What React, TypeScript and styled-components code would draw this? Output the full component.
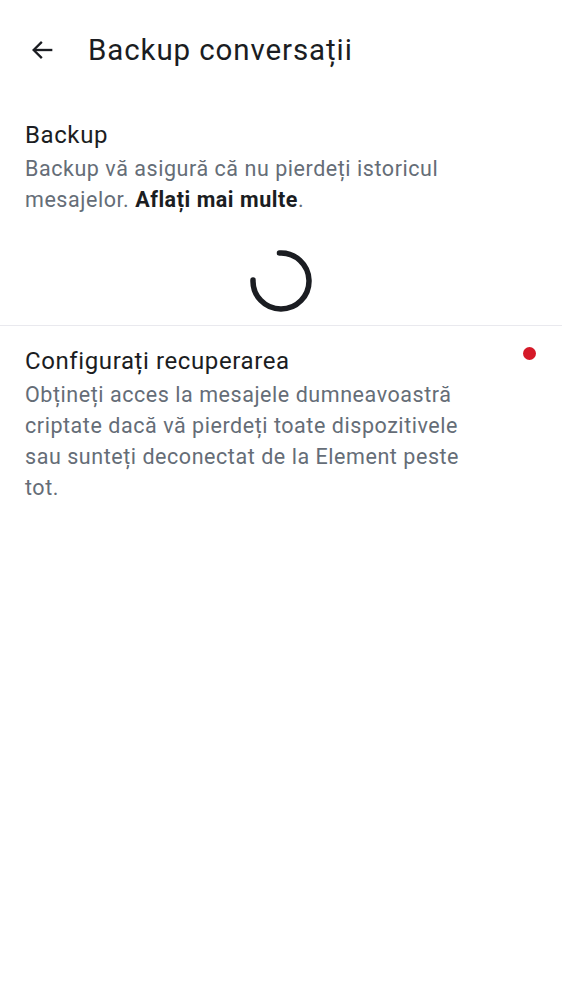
import React from "react";
import styled, { createGlobalStyle } from "styled-components";

const Global = createGlobalStyle`
  html, body { margin: 0; padding: 0; background: #ffffff; }
  body { font-family: Roboto, "Noto Sans", sans-serif; -webkit-font-smoothing: antialiased; }
`;

const Page = styled.div`
  width: 562px;
  min-height: 1000px;
  background: #ffffff;
  display: flex;
  flex-direction: column;
`;

const TopBar = styled.header`
  height: 100px;
  display: flex;
  align-items: center;
  padding-left: 28px;
  gap: 30px;
`;

const BackButton = styled.button`
  width: 30px;
  height: 30px;
  padding: 0;
  border: none;
  background: none;
  display: flex;
  align-items: center;
  justify-content: center;
  color: #1b1d22;
`;

const Title = styled.h1`
  margin: 0;
  font-size: 29.5px;
  font-weight: 400;
  letter-spacing: 0.9px;
  color: #1b1d22;
`;

const Section = styled.section`
  display: flex;
  align-items: flex-start;
  padding: 17px 25px 0 25px;
`;

const TextCol = styled.div`
  width: 450px;
  display: flex;
  flex-direction: column;
`;

const ItemTitle = styled.div`
  font-size: 24px;
  line-height: 36px;
  letter-spacing: 0.6px;
  color: #1b1d22;
`;

const ItemDesc = styled.div`
  font-size: 21.5px;
  line-height: 31px;
  letter-spacing: 0.55px;
  color: #656d77;
  b { color: #1b1d22; font-weight: 700; }
`;

const SpinnerWrap = styled.div`
  display: flex;
  justify-content: center;
  padding: 33px 0 11px;
`;

const Divider = styled.hr`
  margin: 0;
  border: none;
  height: 1px;
  background: #e9e9ee;
`;

const Dot = styled.span`
  margin-left: auto;
  margin-top: 4px;
  margin-right: 1px;
  width: 13px;
  height: 13px;
  border-radius: 50%;
  background: #d51928;
  flex-shrink: 0;
`;

export default function App() {
  return (
    <Page>
      <Global />
      <TopBar>
        <BackButton aria-label="Back">
          <svg width="28" height="28" viewBox="0 0 24 24" fill="none" stroke="currentColor" strokeWidth="2" strokeLinecap="butt">
            <path d="M20 12H4.5" />
            <path d="M11 5L4 12L11 19" strokeLinejoin="miter" />
          </svg>
        </BackButton>
        <Title>Backup conversații</Title>
      </TopBar>
      <Section>
        <TextCol>
          <ItemTitle>Backup</ItemTitle>
          <ItemDesc>
            Backup vă asigură că nu pierdeți istoricul mesajelor. <b>Aflați mai multe</b>.
          </ItemDesc>
        </TextCol>
      </Section>
      <SpinnerWrap>
        <svg width="66" height="66" viewBox="0 0 66 66">
          <path
            d="M31.5 5.05 A28 28 0 1 1 5.02 32"
            fill="none"
            stroke="#1b1d22"
            strokeWidth="5.5"
            strokeLinecap="round"
          />
        </svg>
      </SpinnerWrap>
      <Divider />
      <Section>
        <TextCol>
          <ItemTitle>Configurați recuperarea</ItemTitle>
          <ItemDesc>
            Obțineți acces la mesajele dumneavoastră criptate dacă vă pierdeți toate dispozitivele sau sunteți deconectat de la Element peste tot.
          </ItemDesc>
        </TextCol>
        <Dot />
      </Section>
    </Page>
  );
}
